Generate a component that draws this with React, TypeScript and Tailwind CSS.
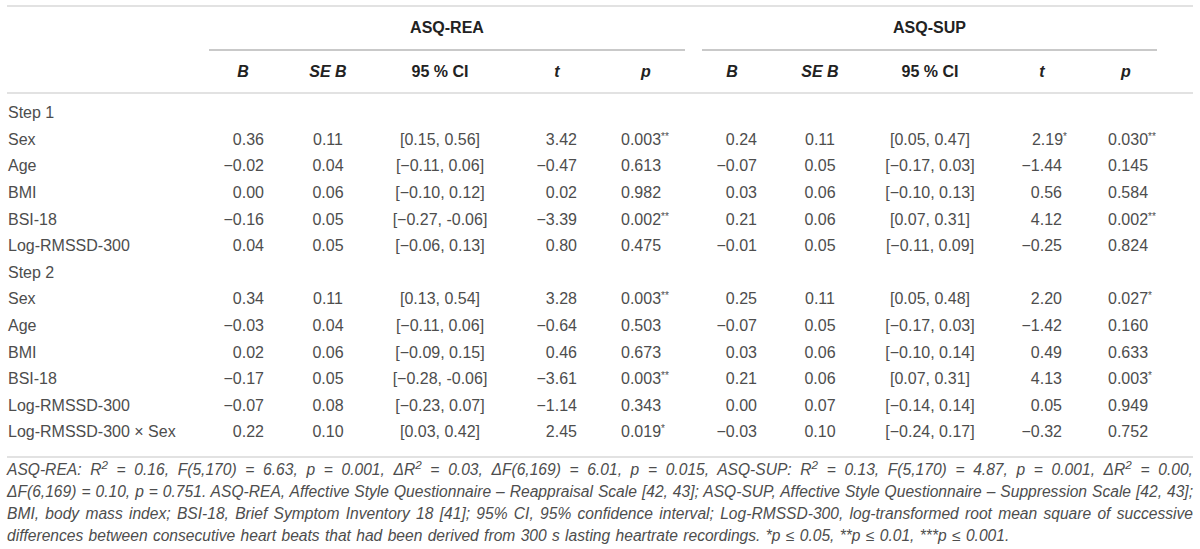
const cols =
  "grid grid-cols-[203px_66px_104px_120px_114px_64px_24px_60px_116px_104px_120px_48px_1fr]";

type Row = { label: string; rea?: string[]; sup?: string[] };

const rows: Row[] = [
  { label: "Step 1" },
  { label: "Sex", rea: ["0.36", "0.11", "[0.15, 0.56]", "3.42", "0.003**"], sup: ["0.24", "0.11", "[0.05, 0.47]", "2.19*", "0.030**"] },
  { label: "Age", rea: ["−0.02", "0.04", "[−0.11, 0.06]", "−0.47", "0.613"], sup: ["−0.07", "0.05", "[−0.17, 0.03]", "−1.44", "0.145"] },
  { label: "BMI", rea: ["0.00", "0.06", "[−0.10, 0.12]", "0.02", "0.982"], sup: ["0.03", "0.06", "[−0.10, 0.13]", "0.56", "0.584"] },
  { label: "BSI-18", rea: ["−0.16", "0.05", "[−0.27, -0.06]", "−3.39", "0.002**"], sup: ["0.21", "0.06", "[0.07, 0.31]", "4.12", "0.002**"] },
  { label: "Log-RMSSD-300", rea: ["0.04", "0.05", "[−0.06, 0.13]", "0.80", "0.475"], sup: ["−0.01", "0.05", "[−0.11, 0.09]", "−0.25", "0.824"] },
  { label: "Step 2" },
  { label: "Sex", rea: ["0.34", "0.11", "[0.13, 0.54]", "3.28", "0.003**"], sup: ["0.25", "0.11", "[0.05, 0.48]", "2.20", "0.027*"] },
  { label: "Age", rea: ["−0.03", "0.04", "[−0.11, 0.06]", "−0.64", "0.503"], sup: ["−0.07", "0.05", "[−0.17, 0.03]", "−1.42", "0.160"] },
  { label: "BMI", rea: ["0.02", "0.06", "[−0.09, 0.15]", "0.46", "0.673"], sup: ["0.03", "0.06", "[−0.10, 0.14]", "0.49", "0.633"] },
  { label: "BSI-18", rea: ["−0.17", "0.05", "[−0.28, -0.06]", "−3.61", "0.003**"], sup: ["0.21", "0.06", "[0.07, 0.31]", "4.13", "0.003*"] },
  { label: "Log-RMSSD-300", rea: ["−0.07", "0.08", "[−0.23, 0.07]", "−1.14", "0.343"], sup: ["0.00", "0.07", "[−0.14, 0.14]", "0.05", "0.949"] },
  { label: "Log-RMSSD-300 × Sex", rea: ["0.22", "0.10", "[0.03, 0.42]", "2.45", "0.019*"], sup: ["−0.03", "0.10", "[−0.24, 0.17]", "−0.32", "0.752"] },
];

// number with trailing significance stars as superscript
const Val = ({ v, hang }: { v: string; hang?: boolean }) => {
  const m = v.match(/^(.*?)(\*+)$/);
  if (!m) return <span>{v}</span>;
  return (
    <span>
      {m[1]}
      <sup className={`text-[10px] ${hang ? "-mr-[5px]" : ""}`}>{m[2]}</sup>
    </span>
  );
};

const Fn = ({ children, last }: { children: React.ReactNode; last?: boolean }) => (
  <div
    className={`whitespace-nowrap ${
      last ? "text-left [word-spacing:1px]" : "text-justify [text-align-last:justify]"
    }`}
  >
    {children}
  </div>
);

export default function App() {
  return (
    <div className="bg-white w-[1200px] h-[549px] pt-[5px] font-['Liberation_Sans',Arial,sans-serif] text-[#4d4d4d] text-[16px] overflow-hidden">
      <div className="mx-[7px] w-[1186px] border-t-2 border-[#e2e2e2]">
        {/* group header */}
        <div className="grid grid-cols-[202px_476px_17px_455px_1fr] h-[44px] font-bold text-[#222]">
          <div />
          <div className="flex items-center justify-center border-b-2 border-[#c9c9c9]">ASQ-REA</div>
          <div />
          <div className="flex items-center justify-center border-b-2 border-[#c9c9c9]">ASQ-SUP</div>
          <div />
        </div>

        {/* column header */}
        <div className={`${cols} h-[43px] items-center text-center font-bold italic text-[#222] border-b-2 border-[#e2e2e2]`}>
          <div />
          <div>B</div>
          <div>SE B</div>
          <div className="not-italic">95 % CI</div>
          <div>t</div>
          <div>p</div>
          <div />
          <div>B</div>
          <div>SE B</div>
          <div className="not-italic">95 % CI</div>
          <div>t</div>
          <div>p</div>
          <div />
        </div>

        {/* body */}
        <div className="pt-[6px] pb-[10px] border-b-2 border-[#e2e2e2]">
          {rows.map((r, i) => (
            <div key={i} className={`${cols} h-[26.6px] items-center`}>
              <div className="pl-[1px]">{r.label}</div>
              {r.rea && r.sup ? (
                <>
                  <div className="text-right pr-[12px]"><Val v={r.rea[0]} /></div>
                  <div className="text-center"><Val v={r.rea[1]} /></div>
                  <div className="text-center"><Val v={r.rea[2]} /></div>
                  <div className="text-right pr-[37px]"><Val v={r.rea[3]} hang /></div>
                  <div className="text-left pl-[7px]"><Val v={r.rea[4]} /></div>
                  <div />
                  <div className="text-right pr-[5px]"><Val v={r.sup[0]} /></div>
                  <div className="text-center"><Val v={r.sup[1]} /></div>
                  <div className="text-center"><Val v={r.sup[2]} /></div>
                  <div className="text-right pr-[40px]"><Val v={r.sup[3]} hang /></div>
                  <div className="text-left pl-[6px] whitespace-nowrap"><Val v={r.sup[4]} /></div>
                  <div />
                </>
              ) : null}
            </div>
          ))}
        </div>

        {/* footnote */}
        <div className="pt-[1px] italic text-[15.6px] leading-[22px]">
          <Fn>
            ASQ-REA: R<sup>2</sup> = 0.16, F(5,170) = 6.63, p = 0.001, ΔR<sup>2</sup> = 0.03, ΔF(6,169) = 6.01, p = 0.015, ASQ-SUP: R<sup>2</sup> = 0.13, F(5,170) = 4.87, p = 0.001, ΔR<sup>2</sup> = 0.00,
          </Fn>
          <Fn>
            ΔF(6,169) = 0.10, p = 0.751. ASQ-REA, Affective Style Questionnaire – Reappraisal Scale [42, 43]; ASQ-SUP, Affective Style Questionnaire – Suppression Scale [42, 43];
          </Fn>
          <Fn>
            BMI, body mass index; BSI-18, Brief Symptom Inventory 18 [41]; 95% CI, 95% confidence interval; Log-RMSSD-300, log-transformed root mean square of successive
          </Fn>
          <Fn last>
            differences between consecutive heart beats that had been derived from 300 s lasting heartrate recordings. *p ≤ 0.05, **p ≤ 0.01, ***p ≤ 0.001.
          </Fn>
        </div>
      </div>
    </div>
  );
}
